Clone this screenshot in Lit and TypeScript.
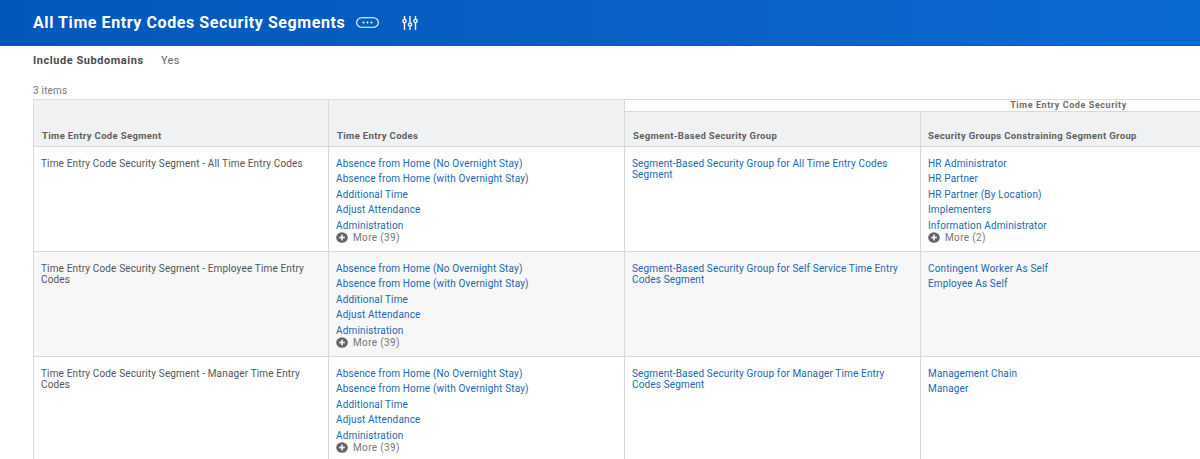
import { LitElement, html, css, svg } from "lit";
import { customElement } from "lit/decorators.js";

const codes = [
  "Absence from Home (No Overnight Stay)",
  "Absence from Home (with Overnight Stay)",
  "Additional Time",
  "Adjust Attendance",
  "Administration",
];

const rows = [
  {
    segment: "Time Entry Code Security Segment - All Time Entry Codes",
    group: "Segment-Based Security Group for All Time Entry Codes Segment",
    constraining: ["HR Administrator", "HR Partner", "HR Partner (By Location)", "Implementers", "Information Administrator"],
    more: 2,
    cls: "r1",
  },
  {
    segment: "Time Entry Code Security Segment - Employee Time Entry Codes",
    group: "Segment-Based Security Group for Self Service Time Entry Codes Segment",
    constraining: ["Contingent Worker As Self", "Employee As Self"],
    more: 0,
    cls: "r2 alt",
  },
  {
    segment: "Time Entry Code Security Segment - Manager Time Entry Codes",
    group: "Segment-Based Security Group for Manager Time Entry Codes Segment",
    constraining: ["Management Chain", "Manager"],
    more: 0,
    cls: "r3",
  },
];

@customElement("app-root")
export class AppRoot extends LitElement {
  static styles = css`
    :host {
      display: block;
      width: 1200px;
      height: 459px;
      overflow: hidden;
      background: #fff;
      font-family: Roboto, "Liberation Sans", sans-serif;
      color: #494949;
    }
    .bar {
      height: 46px;
      box-sizing: border-box;
      background: linear-gradient(90deg, #0058bb 0%, #0a62c6 60%, #0a6ad4 100%);
      border-bottom: 1px solid #0a5cc0;
      display: flex;
      align-items: center;
      padding-left: 33px;
      color: #fff;
    }
    .title {
      font-size: 16px;
      font-weight: 700;
      letter-spacing: 0.58px;
      white-space: nowrap;
    }
    .dots {
      margin-left: 11px;
      width: 23px;
      height: 11px;
      display: block;
    }
    .sliders {
      margin-left: 23px;
      width: 16px;
      height: 14px;
      display: block;
    }
    .meta {
      display: flex;
      align-items: center;
      height: 28px;
      padding-left: 33px;
      font-size: 11px;
      letter-spacing: 0.28px;
    }
    .meta b {
      font-weight: 700;
      width: 128px;
      letter-spacing: 0.55px;
      color: #4c4c4c;
    }
    .meta span {
      color: #666;
    }
    .count {
      margin-top: 9px;
      height: 16px;
      line-height: 16px;
      padding-left: 33px;
      font-size: 10px;
      letter-spacing: 0.2px;
      color: #777;
    }
    .table {
      margin-left: 33px;
      display: grid;
      grid-template-columns: 295px 296px 296px 296px 296px;
      grid-template-rows: 12px 35px 105px 105px 105px;
      border-top: 1px solid #dcdcdc;
      font-size: 10px;
      letter-spacing: 0.15px;
      width: 1479px;
    }
    .head {
      grid-row: span 2;
      background: #f0f1f2;
      border-left: 1px solid #d9d9d9;
      border-bottom: 1px solid #d9d9d9;
      display: flex;
      align-items: flex-end;
      box-sizing: border-box;
      padding: 0 8px 5px;
      font-weight: 700;
      font-size: 9.5px;
      letter-spacing: 0.35px;
      color: #5f5f5f;
    }
    .group {
      grid-column: span 3;
      border-left: 1px solid #d9d9d9;
      border-bottom: 1px solid #d9d9d9;
      box-sizing: border-box;
      text-align: center;
      font-weight: 700;
      font-size: 9px;
      letter-spacing: 0.58px;
      line-height: 11px;
      color: #6e6e6e;
    }
    .sub {
      grid-row: auto;
    }
    .tight {
      padding-left: 7px;
    }
    .cell {
      border-left: 1px solid #d9d9d9;
      border-bottom: 1px solid #d9d9d9;
      box-sizing: border-box;
      padding: 11px 7px 0 7px;
      line-height: 11px;
      color: #555;
    }
    .alt {
      background: #f7f7f8;
    }
    .links {
      display: flex;
      flex-direction: column;
      gap: 4.4px;
    }
    a {
      color: #2168b0;
      text-decoration: none;
      display: block;
    }
    .more {
      display: flex;
      align-items: center;
      gap: 5px;
      margin-top: 1px;
      color: #777;
      letter-spacing: 0.35px;
    }
    .more svg {
      width: 12px;
      height: 11px;
      display: block;
    }
  `;

  private more(n: number) {
    return html`<div class="more">
      <svg viewBox="0 0 12 11">
        <ellipse cx="6" cy="5.5" rx="5.8" ry="5.3" fill="#666"></ellipse>
        <path d="M6 2.8v5.4M3.2 5.5h5.6" stroke="#fff" stroke-width="1.6"></path>
      </svg>
      More (${n})
    </div>`;
  }

  render() {
    return html`
      <div class="bar">
        <div class="title">All Time Entry Codes Security Segments</div>
        <svg class="dots" viewBox="0 0 23 11">
          <rect x="0.7" y="0.7" width="21.6" height="9.6" rx="4.8" fill="none" stroke="#fff" stroke-width="1.1"></rect>
          <circle cx="7.5" cy="5.5" r="1" fill="#fff"></circle>
          <circle cx="11.5" cy="5.5" r="1" fill="#fff"></circle>
          <circle cx="15.5" cy="5.5" r="1" fill="#fff"></circle>
        </svg>
        <svg class="sliders" viewBox="0 0 16 14">
          ${svg`<g stroke="#fff" stroke-width="1.4" fill="none">
            <path d="M2.5 0v3M2.5 7v7M8 0v6.5M8 10.5V14M13.5 0v3M13.5 7v7"></path>
            <circle cx="2.5" cy="5" r="1.6"></circle>
            <circle cx="8" cy="8.5" r="1.6"></circle>
            <circle cx="13.5" cy="5" r="1.6"></circle>
          </g>`}
        </svg>
      </div>
      <div class="meta"><b>Include Subdomains</b><span>Yes</span></div>
      <div class="count">3 items</div>
      <div class="table">
        <div class="head">Time Entry Code Segment</div>
        <div class="head">Time Entry Codes</div>
        <div class="group">Time Entry Code Security</div>
        <div class="head sub">Segment-Based Security Group</div>
        <div class="head sub tight">Security Groups Constraining Segment Group</div>
        <div class="head sub"></div>
        ${rows.map(
          (r) => html`
            <div class="cell ${r.cls}">${r.segment}</div>
            <div class="cell ${r.cls}">
              <div class="links">${codes.map((c) => html`<a>${c}</a>`)}</div>
              ${this.more(39)}
            </div>
            <div class="cell ${r.cls}"><a>${r.group}</a></div>
            <div class="cell ${r.cls}">
              <div class="links">${r.constraining.map((c) => html`<a>${c}</a>`)}</div>
              ${r.more ? this.more(r.more) : ""}
            </div>
            <div class="cell ${r.cls}"></div>
          `
        )}
      </div>
    `;
  }
}
